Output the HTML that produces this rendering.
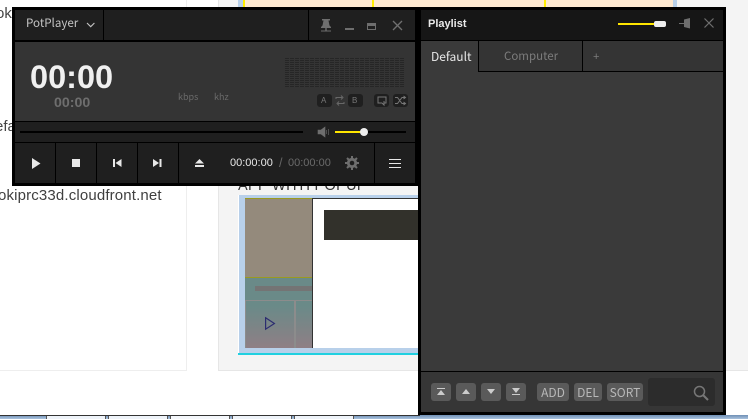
<!DOCTYPE html>
<html><head><meta charset="utf-8">
<style>
html,body{margin:0;padding:0;width:748px;height:419px;overflow:hidden;background:#fff}
body{position:relative;font-family:"Liberation Sans","DejaVu Sans",sans-serif}
.a{position:absolute;display:block}
.t{position:absolute;white-space:nowrap;line-height:1}
.n{font-family:"Noto Sans CJK KR","Liberation Sans",sans-serif}
svg{position:absolute;overflow:visible}
.b{position:absolute;background:#5a5a5a;border-radius:3px;height:18px;top:383px;color:#b8b8b8;font-size:12px;line-height:19px;text-align:center;font-family:"Noto Sans CJK KR","Liberation Sans",sans-serif}
.s{position:absolute;top:94px;height:13px;background:#1f1f1f;border-radius:3px;width:15px}
</style></head><body>
<!-- background page -->
<div class="a" style="left:0;top:0;width:186px;height:370px;background:#fff;border-right:1px solid #eee;border-bottom:1px solid #eee"></div>
<div class="a" style="left:218px;top:0;width:530px;height:370px;background:#f4f4f4;border-left:1px solid #e6e6e6;border-bottom:1px solid #e6e6e6"></div>
<div class="a" style="left:238px;top:0;width:7px;height:8px;background:#b8d0ea"></div>
<div class="a" style="left:245px;top:0;width:428px;height:8px;background:#fde8d0"></div>
<div class="a" style="left:243px;top:0;width:2px;height:8px;background:#ffee00"></div>
<div class="a" style="left:372px;top:0;width:2px;height:8px;background:#ffee00"></div>
<div class="a" style="left:544px;top:0;width:2px;height:8px;background:#ffee00"></div>
<div class="a" style="left:673px;top:0;width:4px;height:8px;background:#b8d0ea"></div>
<div class="t" style="left:-4px;top:6px;font-size:15px;color:#444">ok</div>
<div class="t" style="left:-5px;top:119px;font-size:15px;color:#444">efa</div>
<div class="t" style="left:-2px;top:188px;font-size:15px;letter-spacing:.15px;color:#3f3f3f">okiprc33d.cloudfront.net</div>
<div class="t" style="left:238px;top:179px;font-size:14.500px;letter-spacing:.3px;color:#333">APP WITH POPUP</div>
<!-- thumbnail -->
<div class="a" style="left:238px;top:195px;width:182px;height:160px;background:#fff"></div>
<div class="a" style="left:239px;top:195px;width:181px;height:158px;background:#b8d0ea"></div>
<div class="a" style="left:238px;top:353px;width:182px;height:2px;background:#20d0e0"></div>
<div class="a" style="left:245px;top:198px;width:67px;height:80px;background:#948a7c;border-top:1px solid #9a9a20;border-bottom:1px solid #9a9a20;box-sizing:border-box"></div>
<div class="a" style="left:245px;top:278px;width:67px;height:70px;background:linear-gradient(#6a8a88 0,#6a8a88 40%,#8f7f85 100%)"></div>
<div class="a" style="left:255px;top:286px;width:57px;height:5px;background:#747474"></div>
<div class="a" style="left:245px;top:300px;width:67px;height:1px;background:#8c8c8c"></div>
<div class="a" style="left:245px;top:300px;width:1px;height:48px;background:#8c8c8c"></div>
<div class="a" style="left:294px;top:300px;width:2px;height:48px;background:#8c8c8c"></div>
<svg style="left:265px;top:317px" width="10" height="13"><path d="M.6.8 9.400 6.500.6 12.200Z" fill="none" stroke="#2c2c70" stroke-width="1.200"/></svg>
<div class="a" style="left:312px;top:198px;width:108px;height:150px;background:#fff;border-top:1px solid #333;border-left:1px solid #333;box-sizing:border-box"></div>
<div class="a" style="left:324px;top:210px;width:96px;height:30px;background:#32312b"></div>
<!-- taskbar -->
<div class="a" style="left:0;top:415px;width:748px;height:4px;background:linear-gradient(#6f8fb5,#a9c2de)"></div>
<div class="a" style="left:0;top:415px;width:420px;height:1px;background:#333"></div>
<div class="a" style="left:46px;top:416px;width:58px;height:3px;background:#eef3f9;border-left:1px solid #555;border-right:1px solid #555"></div>
<div class="a" style="left:108px;top:416px;width:58px;height:3px;background:#eef3f9;border-left:1px solid #555;border-right:1px solid #555"></div>
<div class="a" style="left:170px;top:416px;width:58px;height:3px;background:#f4f7fb;border-left:1px solid #555;border-right:1px solid #555"></div>
<div class="a" style="left:232px;top:416px;width:58px;height:3px;background:#eef3f9;border-left:1px solid #555;border-right:1px solid #555"></div>
<div class="a" style="left:294px;top:416px;width:58px;height:3px;background:#eef3f9;border-left:1px solid #555;border-right:1px solid #555"></div>
<!-- player -->
<div class="a" style="left:12px;top:7px;width:409px;height:179px;background:#000"></div>
<div class="a" style="left:15px;top:10px;width:400px;height:30px;background:#1f1f1f"></div>
<div class="a" style="left:103px;top:10px;width:1px;height:30px;background:#000"></div>
<div class="a" style="left:308px;top:10px;width:1px;height:30px;background:#000"></div>
<div class="t n" style="left:26px;top:18px;font-size:11.600px;color:#c4c4c4">PotPlayer</div>
<svg style="left:86px;top:22px" width="10" height="6"><path d="M1 1 4.700 4.700 8.400 1" fill="none" stroke="#c4c4c4" stroke-width="1.100"/></svg>
<svg style="left:320px;top:19px" width="12" height="13"><path d="M2 0H10V1.500H8.500L9.500 6.500 11 8V9H1V8L2.500 6.500 3.500 1.500H2ZM5.300 9H6.700V11.500H11V12.500H1V11.500H5.300Z" fill="#6e6e6e"/></svg>
<div class="a" style="left:345px;top:28px;width:9px;height:2px;background:#6e6e6e"></div>
<div class="a" style="left:367px;top:23px;width:7px;height:3px;border:1px solid #6e6e6e;border-top:3px solid #6e6e6e"></div>
<svg style="left:392px;top:20px" width="11" height="11"><path d="M1 1 10 10M10 1 1 10" stroke="#707070" stroke-width="1.300"/></svg>
<div class="a" style="left:15px;top:42px;width:400px;height:79px;background:#343434"></div>
<div class="t" style="left:30px;top:61px;font-size:32.500px;font-weight:bold;color:#f0f0f0">00:00</div>
<div class="t" style="left:54px;top:96px;font-size:14.200px;font-weight:bold;color:#6e6e6e">00:00</div>
<div class="t n" style="left:178px;top:92px;font-size:9px;color:#6a6a6a">kbps</div>
<div class="t n" style="left:214px;top:92px;font-size:9px;color:#6a6a6a">khz</div>
<div class="a" style="left:285px;top:58px;width:119px;height:29px;background:repeating-linear-gradient(0deg,#262626 0 1px,#343434 1px 2px)"></div>
<div class="a" style="left:285px;top:58px;width:119px;height:29px;background:repeating-linear-gradient(90deg,transparent 0 4px,#343434 4px 5px)"></div>
<div class="s" style="left:317px"></div>
<div class="s" style="left:348px"></div>
<div class="s" style="left:374px"></div>
<div class="s" style="left:393px"></div>
<div class="t" style="left:321px;top:97px;font-size:8px;color:#777">A</div>
<div class="t" style="left:352px;top:97px;font-size:8px;color:#777">B</div>
<svg style="left:335px;top:95px" width="10" height="11"><path d="M1 4V2.500H7M6 .5 8 2.500 6 4.500M9 7V8.500H3M4 6.500 2 8.500 4 10.500" fill="none" stroke="#686868"/></svg>
<svg style="left:377px;top:96px" width="10" height="10"><path d="M5 7H1V1H9V7L7 7M7 5V9L5 7" fill="none" stroke="#777"/></svg>
<svg style="left:395px;top:96px" width="11" height="9"><path d="M0 1.500H2.500L7 7.500H10M0 7.500H2.500L7 1.500H10M8.500 0 10.500 1.500 8.500 3M8.500 6 10.500 7.500 8.500 9" fill="none" stroke="#777"/></svg>
<div class="a" style="left:15px;top:122px;width:400px;height:20px;background:#1f1f1f"></div>
<div class="a" style="left:20px;top:131px;width:283px;height:2px;background:#000"></div>
<svg style="left:318px;top:127px" width="12" height="10"><path d="M0 3H3L7 0V10L3 7H0ZM8.500 3V7M10.500 2V8" fill="#6e6e6e" stroke="#6e6e6e" stroke-width=".6"/></svg>
<div class="a" style="left:335px;top:131px;width:71px;height:2px;background:#000"></div>
<div class="a" style="left:335px;top:131px;width:29px;height:2px;background:#ffe600"></div>
<div class="a" style="left:360px;top:128px;width:8px;height:8px;border-radius:50%;background:#eee"></div>
<div class="a" style="left:15px;top:143px;width:400px;height:40px;background:#1f1f1f"></div>
<div class="a" style="left:55px;top:143px;width:1px;height:40px;background:#000"></div>
<div class="a" style="left:96px;top:143px;width:1px;height:40px;background:#000"></div>
<div class="a" style="left:137px;top:143px;width:1px;height:40px;background:#000"></div>
<div class="a" style="left:178px;top:143px;width:1px;height:40px;background:#000"></div>
<div class="a" style="left:374px;top:143px;width:1px;height:40px;background:#000"></div>
<svg style="left:32px;top:158px" width="9" height="11"><path d="M0 0 8.500 5.500 0 11Z" fill="#e8e8e8"/></svg>
<div class="a" style="left:72px;top:159px;width:8px;height:8px;background:#e8e8e8"></div>
<svg style="left:113px;top:159px" width="9" height="8"><path d="M0 0H2V8H0ZM8.500 0V8L2.500 4Z" fill="#e8e8e8"/></svg>
<svg style="left:153px;top:159px" width="9" height="8"><path d="M8.500 0H6.500V8H8.500ZM0 0V8L6 4Z" fill="#e8e8e8"/></svg>
<svg style="left:195px;top:159px" width="9" height="9"><path d="M4.500 0 9 4.500H0ZM0 6H9V8H0Z" fill="#e8e8e8"/></svg>
<div class="t" style="left:230px;top:158px;font-size:11px;color:#e8e8e8">00:00:00</div>
<div class="t" style="left:279px;top:157px;font-size:12.500px;color:#666">/</div>
<div class="t" style="left:288px;top:158px;font-size:11px;color:#6a6a6a">00:00:00</div>
<svg style="left:345px;top:156px" width="14" height="14" viewBox="0 0 14 14"><circle cx="7" cy="7" r="3.700" fill="none" stroke="#6e6e6e" stroke-width="2.800"/><path d="M7 0V14M0 7H14M2 2 12 12M12 2 2 12" stroke="#6e6e6e" stroke-width="2"/><circle cx="7" cy="7" r="2.300" fill="#1f1f1f"/></svg>
<div class="a" style="left:389px;top:159px;width:12px;height:1px;background:#e8e8e8"></div>
<div class="a" style="left:389px;top:163px;width:12px;height:1px;background:#e8e8e8"></div>
<div class="a" style="left:389px;top:167px;width:12px;height:1px;background:#e8e8e8"></div>
<!-- playlist -->
<div class="a" style="left:418px;top:7px;width:308px;height:408px;background:#000"></div>
<div class="a" style="left:421px;top:10px;width:302px;height:30px;background:#161616"></div>
<div class="t" style="left:428px;top:19px;font-size:11px;font-weight:bold;color:#eaeaea">Playlist</div>
<div class="a" style="left:618px;top:23px;width:38px;height:2px;background:#ffe600"></div>
<div class="a" style="left:654px;top:21px;width:12px;height:6px;border-radius:2px;background:#eee"></div>
<svg style="left:679px;top:18px" width="12" height="11"><path d="M0 5H5L5 1.500 11 0V10.500L5 9V6H0Z" fill="#6e6e6e"/></svg>
<svg style="left:704px;top:18px" width="10" height="10"><path d="M.5.5 9.500 9.500M9.500.5 .5 9.500" stroke="#707070" stroke-width="1.200"/></svg>
<div class="a" style="left:421px;top:41px;width:302px;height:30px;background:#343434"></div>
<div class="a" style="left:421px;top:41px;width:57px;height:31px;background:#3a3a3a"></div>
<div class="a" style="left:478px;top:41px;width:1px;height:31px;background:#000"></div>
<div class="a" style="left:582px;top:41px;width:1px;height:31px;background:#000"></div>
<div class="a" style="left:479px;top:71px;width:244px;height:1px;background:#000"></div>
<div class="t n" style="left:431px;top:51px;font-size:12px;color:#e8e8e8">Default</div>
<div class="t n" style="left:504px;top:51px;font-size:11.500px;color:#7c7c7c">Computer</div>
<div class="t" style="left:593px;top:52px;font-size:11px;color:#7c7c7c">+</div>
<div class="a" style="left:421px;top:72px;width:302px;height:299px;background:#3a3a3a"></div>
<div class="a" style="left:421px;top:371px;width:302px;height:1px;background:#000"></div>
<div class="a" style="left:421px;top:372px;width:302px;height:40px;background:#363636"></div>
<div class="b" style="left:431px;width:20px"></div>
<div class="b" style="left:456px;width:20px"></div>
<div class="b" style="left:481px;width:20px"></div>
<div class="b" style="left:506px;width:20px"></div>
<svg style="left:437px;top:388px" width="8" height="8"><path d="M0 0H8V1H0ZM4 2 8 7H0Z" fill="#ccc"/></svg>
<svg style="left:462px;top:389px" width="8" height="6"><path d="M4 0 8 5H0Z" fill="#ccc"/></svg>
<svg style="left:487px;top:389px" width="8" height="6"><path d="M0 0H8L4 5Z" fill="#ccc"/></svg>
<svg style="left:512px;top:388px" width="8" height="8"><path d="M0 0H8L4 5ZM0 6H8V7H0Z" fill="#ccc"/></svg>
<div class="b" style="left:537px;width:32px">ADD</div>
<div class="b" style="left:574px;width:28px">DEL</div>
<div class="b" style="left:607px;width:36px">SORT</div>
<div class="a" style="left:648px;top:378px;width:67px;height:28px;background:#2c2c2c;border-radius:3px"></div>
<svg style="left:693px;top:385px" width="16" height="16"><circle cx="6.500" cy="6.500" r="5" fill="none" stroke="#777" stroke-width="1.500"/><path d="M10 10 15 15" stroke="#777" stroke-width="2"/></svg>
</body></html>
